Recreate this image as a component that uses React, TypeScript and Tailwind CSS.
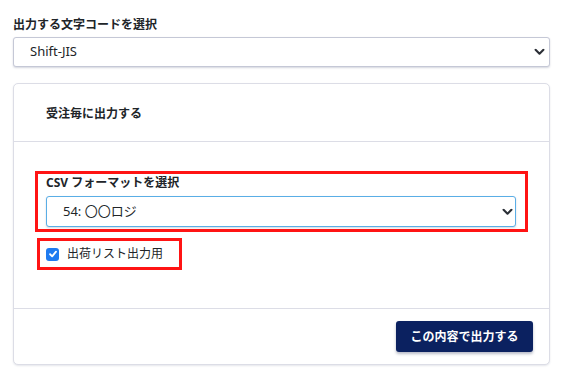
import { useState } from "react";

function Chevron() {
  return (
    <svg
      viewBox="0 0 12 8"
      className="pointer-events-none absolute top-1/2 -translate-y-1/2 w-[11px] h-[7px] text-[#2b2f36]"
      fill="none"
      stroke="currentColor"
      strokeWidth="2.4"
      strokeLinecap="round"
      strokeLinejoin="round"
    >
      <path d="M1.5 1.5 6 6l4.5-4.5" />
    </svg>
  );
}

export default function App() {
  const [charset, setCharset] = useState("sjis");
  const [format, setFormat] = useState("54");
  const [shipping, setShipping] = useState(true);

  return (
    <div className="min-h-[378px] bg-white pt-[17px] pl-[13px] text-[#212529] font-['Noto_Sans','Noto_Sans_CJK_JP',sans-serif]">
      <div className="w-[537px]">
        {/* Charset */}
        <label className="block text-[12px] leading-4 font-bold">
          出力する文字コードを選択
        </label>
        <div className="relative mt-1">
          <select
            value={charset}
            onChange={(e) => setCharset(e.target.value)}
            className="block w-full h-[30px] appearance-none rounded-[3px] border border-[#c5c8d6] bg-white pl-4 pr-8 text-[13px] text-[#212529] shadow-[0_1px_2px_rgba(40,50,90,0.2)] outline-none"
          >
            <option value="sjis">Shift-JIS</option>
            <option value="utf8">UTF-8</option>
          </select>
          <span className="absolute right-[16px] top-0 h-full">
            <Chevron />
          </span>
        </div>

        {/* Card */}
        <div className="mt-4 rounded-[5px] border border-[#dcdde6] bg-white shadow-[0_1px_2px_rgba(40,50,90,0.12)]">
          <div className="border-b border-[#dcdde6] pl-8 pt-[22px] pb-[19px]">
            <h2 className="text-[12px] leading-4 font-bold">受注毎に出力する</h2>
          </div>

          <div className="pt-[29px] pb-[38px] pl-[21px]">
            <div className="w-[493px] border-[3px] border-[#ff1414] pl-2 pr-[9px] pt-[1px] pb-[2px]">
              <label className="block text-[12px] leading-4 font-bold">
                CSV フォーマットを選択
              </label>
              <div className="relative mt-[5px]">
                <select
                  value={format}
                  onChange={(e) => setFormat(e.target.value)}
                  className="block w-full h-[31px] appearance-none rounded-[3px] border border-[#5aaee6] bg-white pl-4 pr-8 text-[13px] text-[#212529] shadow-[0_1px_2px_rgba(40,50,90,0.2)] outline-none"
                >
                  <option value="54">54: 〇〇ロジ</option>
                  <option value="55">55: 標準フォーマット</option>
                </select>
                <span className="absolute right-[14px] top-0 h-full">
                  <Chevron />
                </span>
              </div>
            </div>

            <label className="ml-[2px] mt-[6px] flex h-[32px] w-[145px] cursor-pointer items-center gap-2 border-[3px] border-[#ff1414] pl-[6px]">
              <input
                type="checkbox"
                checked={shipping}
                onChange={(e) => setShipping(e.target.checked)}
                className="sr-only"
              />
              <span className="flex h-[13px] w-[13px] items-center justify-center rounded-[3px] bg-[#1f7bf0]">
                {shipping && (
                  <svg viewBox="0 0 12 12" className="h-[10px] w-[10px]" fill="none" stroke="white" strokeWidth="2.2" strokeLinecap="round" strokeLinejoin="round">
                    <path d="M2.5 6.3 5 8.8 9.6 3.2" />
                  </svg>
                )}
              </span>
              <span className="text-[12px] leading-4">出荷リスト出力用</span>
            </label>
          </div>

          <div className="flex justify-end border-t border-[#dcdde6] pt-3 pb-3 pr-4">
            <button
              type="button"
              className="h-[31px] w-[137px] rounded-[3px] bg-[#0b2160] text-[12px] font-bold text-white shadow-[0_2px_3px_rgba(20,30,70,0.3)]"
            >
              この内容で出力する
            </button>
          </div>
        </div>
      </div>
    </div>
  );
}
